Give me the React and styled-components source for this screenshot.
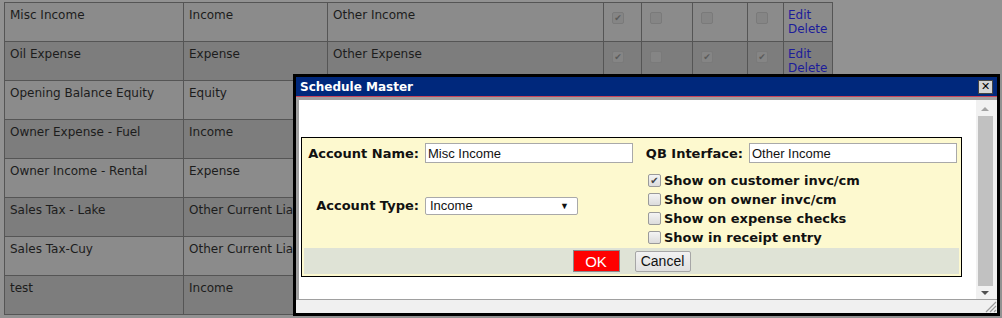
import React from "react";
import styled, { createGlobalStyle } from "styled-components";

const GlobalStyle = createGlobalStyle`
  html, body {
    margin: 0;
    padding: 0;
    background: #929292;
    overflow: hidden;
  }
  body {
    font-family: "DejaVu Sans", Verdana, sans-serif;
  }
`;

const Page = styled.div`
  position: relative;
  width: 1002px;
  height: 318px;
  overflow: hidden;
  padding: 2px 0 0 4px;
  box-sizing: border-box;
`;

const Grid = styled.table`
  border-collapse: collapse;
  table-layout: fixed;
  width: 828px;
  font-size: 12px;
  color: #1c1c1c;
`;

const Row = styled.tr`
  height: 39px;
  background: ${(p) => (p.$dark ? "#7d7d7d" : "#8b8b8b")};
`;

const Cell = styled.td`
  border: 1px solid #555;
  padding: 5px 5px 0 5px;
  vertical-align: top;
  line-height: 14px;
  white-space: nowrap;
  overflow: hidden;
`;

const BoxCell = styled(Cell)`
  padding: 9px 0 0 8px;
`;

const LinkCell = styled(Cell)`
  padding-left: 4px;
  color: #1c1c9a;
`;

const MiniBox = styled.span`
  display: block;
  width: 10px;
  height: 10px;
  border: 1px solid #7a7a7a;
  border-radius: 2px;
  background: #858585;
  color: #5a5a5a;
  font-size: 9px;
  line-height: 10px;
  text-align: center;
`;

const Overlay = styled.div`
  position: absolute;
  left: 293px;
  top: 74px;
  width: 707px;
  height: 242px;
  box-sizing: border-box;
  border: 3px solid #000;
  background: #f0f0f0;
  display: flex;
  flex-direction: column;
`;

const TitleBar = styled.div`
  height: 19px;
  background: #00287c;
  border-bottom: 1px solid #c8455a;
  display: flex;
  align-items: center;
  justify-content: space-between;
  padding: 0 4px 0 4px;
  color: #fff;
  font-weight: bold;
  font-size: 12px;
`;

const CloseBox = styled.div`
  width: 13px;
  height: 12px;
  background: #d4d4d4;
  border: 1px solid #444;
  color: #000;
  font-size: 11px;
  line-height: 12px;
  text-align: center;
  font-weight: bold;
`;

const FrameArea = styled.div`
  flex: 1;
  display: flex;
  border-top: 3px solid #a0a0a0;
  border-left: 3px solid #a0a0a0;
  border-bottom: 1px solid #a0a0a0;
  background: #fff;
`;

const FrameContent = styled.div`
  flex: 1;
  padding: 37px 14px 0 2px;
`;

const Scrollbar = styled.div`
  width: 19px;
  background: #f1f1f1;
  display: flex;
  flex-direction: column;
  align-items: center;
  padding: 0 3px 0 0;
`;

const Arrow = styled.div`
  width: 0;
  height: 0;
  border-left: 4px solid transparent;
  border-right: 4px solid transparent;
  ${(p) =>
    p.$down
      ? "border-top: 4px solid #505050; margin: 5px 0 4px;"
      : "border-bottom: 4px solid #a3a3a3; margin: 7px 0 5px;"}
`;

const Thumb = styled.div`
  width: 15px;
  flex: 1;
  background: #c1c1c1;
`;

const StatusStrip = styled.div`
  height: 13px;
  background: #f0f0f0;
  display: flex;
  justify-content: flex-end;
  align-items: flex-end;
`;

const Panel = styled.div`
  width: 661px;
  box-sizing: border-box;
  border: 1px solid #000;
  background: #fdf9cf;
  display: grid;
  grid-template-columns: 123px 218px 106px 212px;
  padding-top: 5px;
`;

const Label = styled.div`
  font-weight: bold;
  font-size: 13px;
  color: #111;
  padding-right: 6px;
  white-space: nowrap;
  display: flex;
  align-items: center;
  justify-content: ${(p) => (p.$right ? "flex-end" : "flex-start")};
`;

const TextInput = styled.input`
  width: 208px;
  height: 20px;
  box-sizing: border-box;
  border: 1px solid #a9a9a9;
  padding: 0 2px;
  font-family: "Liberation Sans", Arial, sans-serif;
  font-size: 13px;
  color: #111;
  background: #fff;
  outline: none;
`;

const SelectBox = styled.div`
  width: 153px;
  height: 18px;
  box-sizing: border-box;
  border: 1px solid #a9a9a9;
  border-radius: 2px;
  background: #fff;
  font-family: "Liberation Sans", Arial, sans-serif;
  font-size: 13px;
  color: #111;
  display: flex;
  align-items: center;
  justify-content: space-between;
  padding: 0 8px 0 4px;
  align-self: center;
`;

const Caret = styled.span`
  font-size: 9px;
`;

const ChecksList = styled.div`
  grid-column: 3 / 5;
  padding: 11px 0 4px 5px;
  display: flex;
  flex-direction: column;
  gap: 6px;
`;

const CheckRow = styled.label`
  display: flex;
  align-items: center;
  gap: 3px;
  font-weight: bold;
  font-size: 13px;
  color: #111;
  line-height: 13px;
`;

const CheckBox = styled.span`
  width: 11px;
  height: 11px;
  border: 1px solid #9a9a9a;
  border-radius: 2px;
  background: linear-gradient(#f4f4f4, #dcdcdc);
  color: #444;
  font-size: 10px;
  line-height: 11px;
  text-align: center;
`;

const ButtonBar = styled.div`
  grid-column: 1 / 5;
  background: #dfe3d6;
  margin: 0 2px 2px 2px;
  height: 26px;
  display: flex;
  justify-content: center;
  align-items: center;
  gap: 15px;
`;

const Button = styled.button`
  font-family: "Liberation Sans", Arial, sans-serif;
  font-size: ${(p) => (p.$primary ? "15px" : "14px")};
  height: ${(p) => (p.$primary ? "22px" : "21px")};
  width: ${(p) => (p.$primary ? "47px" : "56px")};
  padding: 0;
  color: ${(p) => (p.$primary ? "#fff" : "#111")};
  background: ${(p) => (p.$primary ? "#ff0000" : "linear-gradient(#f2f2f2, #e0e0e0)")};
  border: 1px solid ${(p) => (p.$primary ? "#8a8a8a" : "#a6a6a6")};
  border-radius: ${(p) => (p.$primary ? "0" : "2px")};
`;

const Grip = styled.svg`
  display: block;
`;

const rows = [
  ["Misc Income", "Income", "Other Income", [1, 0, 0, 0]],
  ["Oil Expense", "Expense", "Other Expense", [1, 0, 1, 1]],
  ["Opening Balance Equity", "Equity", "", [0, 0, 0, 0]],
  ["Owner Expense - Fuel", "Income", "", [0, 0, 0, 0]],
  ["Owner Income - Rental", "Expense", "", [0, 0, 0, 0]],
  ["Sales Tax - Lake", "Other Current Liability", "", [0, 0, 0, 0]],
  ["Sales Tax-Cuy", "Other Current Liability", "", [0, 0, 0, 0]],
  ["test", "Income", "", [0, 0, 0, 0]],
];

const options = [
  { text: "Show on customer invc/cm", on: true },
  { text: "Show on owner invc/cm", on: false },
  { text: "Show on expense checks", on: false },
  { text: "Show in receipt entry", on: false },
];

const widths = [179, 144, 276, 38, 51, 55, 36, 49];

export default function App() {
  return (
    <>
      <GlobalStyle />
      <Page>
        <Grid>
          <colgroup>
            {widths.map((w, i) => (
              <col key={i} style={{ width: w }} />
            ))}
          </colgroup>
          <tbody>
            {rows.map((r, i) => (
              <Row key={r[0]} $dark={i % 2 === 1}>
                <Cell>{r[0]}</Cell>
                <Cell>{r[1]}</Cell>
                <Cell>{r[2]}</Cell>
                {r[3].map((c, j) => (
                  <BoxCell key={j}>
                    <MiniBox>{c ? "✔" : ""}</MiniBox>
                  </BoxCell>
                ))}
                <LinkCell>
                  Edit
                  <br />
                  Delete
                </LinkCell>
              </Row>
            ))}
          </tbody>
        </Grid>

        <Overlay>
          <TitleBar>
            <span>Schedule Master</span>
            <CloseBox>✕</CloseBox>
          </TitleBar>
          <FrameArea>
            <FrameContent>
              <Panel>
                <Label $right>Account Name:</Label>
                <TextInput defaultValue="Misc Income" />
                <Label $right>QB Interface:</Label>
                <TextInput defaultValue="Other Income" />

                <Label $right>Account Type:</Label>
                <SelectBox>
                  <span>Income</span>
                  <Caret>▼</Caret>
                </SelectBox>
                <ChecksList>
                  {options.map((o) => (
                    <CheckRow key={o.text}>
                      <CheckBox>{o.on ? "✔" : ""}</CheckBox>
                      {o.text}
                    </CheckRow>
                  ))}
                </ChecksList>

                <ButtonBar>
                  <Button $primary>OK</Button>
                  <Button>Cancel</Button>
                </ButtonBar>
              </Panel>
            </FrameContent>
            <Scrollbar>
              <Arrow />
              <Thumb />
              <Arrow $down />
            </Scrollbar>
          </FrameArea>
          <StatusStrip>
            <Grip width="13" height="13" viewBox="0 0 13 13">
              <path d="M12 2 L2 12 M12 6 L6 12 M12 10 L10 12" stroke="#9a9a9a" strokeWidth="1.2" />
            </Grip>
          </StatusStrip>
        </Overlay>
      </Page>
    </>
  );
}
